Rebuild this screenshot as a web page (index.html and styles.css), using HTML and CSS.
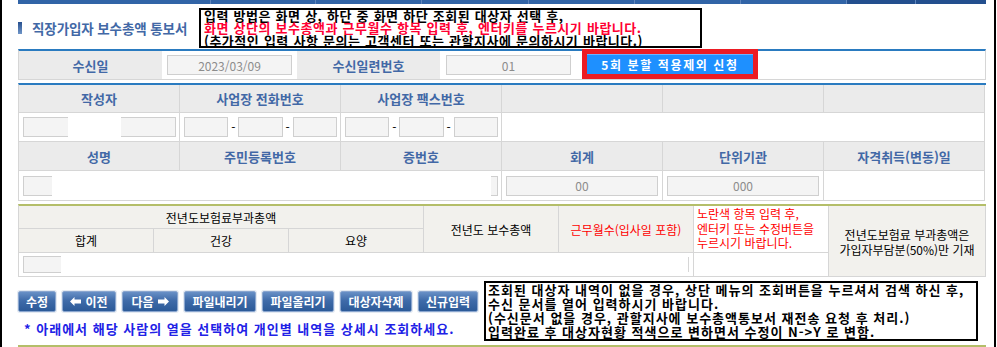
FILE: index.html
```html
<!DOCTYPE html>
<html lang="ko">
<head>
<meta charset="utf-8">
<title>직장가입자 보수총액 통보서</title>
<link rel="stylesheet" href="styles.css">
</head>
<body>
<div class="frame">
  <div class="page">
    <div class="tabbar">
      <span class="seg"></span><span class="seg"></span><span class="seg"></span><span class="seg"></span><span class="seg"></span><span class="seg"></span><span class="seg"></span><span class="seg dark"></span><span class="seg dark"></span>
    </div>

    <div class="title-row">
      <h1 class="title"><span class="title-mark"></span>직장가입자 보수총액 통보서</h1>
      <div class="notice-top">
        <p>입력 방법은 화면 상, 하단 중 화면 하단 조회된 대상자 선택 후,</p>
        <p class="red">화면 상단의 보수총액과 근무월수 항목 입력 후, 엔터키를 누르시기 바랍니다.</p>
        <p>(추가적인 입력 사항 문의는 고객센터 또는 관할지사에 문의하시기 바랍니다.)</p>
      </div>
    </div>

    <div class="recv">
      <div class="lbl lbl-a">수신일</div>
      <div class="val val-a"><span class="inp">2023/03/09</span></div>
      <div class="lbl lbl-b">수신일련번호</div>
      <div class="val val-b"><span class="inp">01</span></div>
      <div class="btn-cell"><span class="red-box"><button class="apply-btn">5회 분할 적용제외 신청</button></span></div>
    </div>

    <div class="info">
      <div class="th">작성자</div>
      <div class="th">사업장 전화번호</div>
      <div class="th">사업장 팩스번호</div>
      <div class="th"></div>
      <div class="th"></div>
      <div class="th"></div>

      <div class="td split">
        <span class="inp part-l"></span><span class="hole"></span><span class="inp part-r"></span>
      </div>
      <div class="td phone"><span class="inp"></span><span class="dash">-</span><span class="inp"></span><span class="dash">-</span><span class="inp"></span></div>
      <div class="td phone"><span class="inp"></span><span class="dash">-</span><span class="inp"></span><span class="dash">-</span><span class="inp"></span></div>
      <div class="td span3"></div>

      <div class="th">성명</div>
      <div class="th">주민등록번호</div>
      <div class="th">증번호</div>
      <div class="th">회계</div>
      <div class="th">단위기관</div>
      <div class="th">자격취득(변동)일</div>

      <div class="td span3 masked"><span class="inp sliver-a"></span><span class="inp sliver-b"></span></div>
      <div class="td pad"><span class="inp">00</span></div>
      <div class="td pad"><span class="inp">000</span></div>
      <div class="td"></div>
    </div>

    <div class="premium">
      <div class="ph c-grp">전년도보험료부과총액</div>
      <div class="ph c-pay">전년도 보수총액</div>
      <div class="ph c-mon red">근무월수(입사일 포함)</div>
      <div class="ph c-note">노란색 항목 입력 후,<br>엔터키 또는 수정버튼을<br>누르시기 바랍니다.</div>
      <div class="ph c-info">전년도보험료 부과총액은<br>가입자부담분(50%)만 기재</div>
      <div class="ph c-sum">합계</div>
      <div class="ph c-h">건강</div>
      <div class="ph c-y">요양</div>
      <div class="pd c-data"><span class="inp sliver-c"></span><span class="edge"></span></div>
      <div class="pd c-last"></div>
    </div>

    <div class="bottom">
      <div class="actions">
        <div class="btns">
          <button class="btn b-edit">수정</button>
          <button class="btn b-prev"><svg class="arr" viewBox="0 0 11 9" width="11" height="9"><path d="M0 4.5 L4.5 0 L4.5 2.5 L11 2.5 L11 6.5 L4.5 6.5 L4.5 9 Z" fill="#fff"/></svg>이전</button>
          <button class="btn b-next">다음<svg class="arr arr-r" viewBox="0 0 11 9" width="11" height="9"><path d="M11 4.5 L6.5 0 L6.5 2.5 L0 2.5 L0 6.5 L6.5 6.5 L6.5 9 Z" fill="#fff"/></svg></button>
          <button class="btn b-file">파일내리기</button>
          <button class="btn b-file">파일올리기</button>
          <button class="btn b-file">대상자삭제</button>
          <button class="btn b-new">신규입력</button>
        </div>
        <p class="hint">* 아래에서 해당 사람의 열을 선택하여 개인별 내역을 상세시 조회하세요.</p>
      </div>
      <div class="notice-bottom">
        <p>조회된 대상자 내역이 없을 경우, 상단 메뉴의 조회버튼을 누르셔서 검색 하신 후,</p>
        <p>수신 문서를 열어 입력하시기 바랍니다.</p>
        <p>(수신문서 없을 경우, 관할지사에 보수총액통보서 재전송 요청 후 처리.)</p>
        <p>입력완료 후 대상자현황 적색으로 변하면서 수정이 N-&gt;Y 로 변함.</p>
      </div>
    </div>
    <div class="next-line"></div>
  </div>
</div>
</body>
</html>
```
FILE: styles.css
```css
* { box-sizing: border-box; margin: 0; padding: 0; }
html, body { background: #fff; }
body {
  width: 997px;
  height: 347px;
  overflow: hidden;
  font-family: "Noto Sans CJK KR", "Noto Sans", sans-serif;
  font-size: 12px;
  color: #000;
}
.frame {
  width: 996px;
  height: 347px;
  border-left: 2px solid #000;
  border-right: 2px solid #000;
}
.page {
  margin-left: 16px;
  width: 968px;
}

/* top tab strip */
.tabbar {
  height: 4px;
  display: grid;
  grid-template-columns: 192px 104px 105px 106px 105px 105px 105px 68px 1fr;
  column-gap: 1px;
  background: #5f86bd;
}
.seg { background: #3164a7; }
.seg.dark { background: #234f8e; }

/* title row */
.title-row {
  height: 45px;
  display: flex;
  align-items: flex-start;
}
.title {
  width: 181px;
  height: 45px;
  display: flex;
  align-items: center;
  padding-top: 3px;
  font-size: 13.5px;
  font-weight: 700;
  color: #4268a6;
  letter-spacing: -0.1px;
}
.title-mark {
  width: 4px;
  height: 12px;
  margin-right: 10px;
  background: linear-gradient(#27508f, #6f95c8);
}
.notice-top {
  margin-top: 4px;
  width: 503px;
  height: 40px;
  border: 2px solid #000;
  padding: 0 3px;
  font-size: 13px;
  font-weight: 700;
  line-height: 12.4px;
  letter-spacing: 0.5px;
  word-spacing: 0.5px;
  white-space: nowrap;
}
.red { color: #ff0033; }

/* inputs */
.inp {
  display: flex;
  align-items: center;
  justify-content: center;
  height: 20px;
  background: #f4f4f4;
  border: 1px solid #cfcfcf;
  color: #8c8c8c;
  font-size: 12px;
}

/* receive row */
.recv {
  display: flex;
  height: 31px;
  border-top: 2px solid #2a7bc0;
  border-bottom: 1px solid #d6d6d6;
  border-left: 1px solid #d6d6d6;
  border-right: 1px solid #d6d6d6;
}
.lbl {
  display: flex;
  align-items: center;
  justify-content: center;
  background: #ebebeb;
  color: #4268a6;
  font-weight: 700;
  font-size: 13px;
}
.lbl-a { width: 143px; }
.lbl-b { width: 143px; }
.val {
  display: flex;
  align-items: center;
}
.val .inp { flex: 1; }
.val-a { width: 135px; padding: 0 5px 0 5px; }
.val-b { width: 136px; padding: 0 5px 0 6px; }
.btn-cell {
  flex: 1;
  padding-left: 6px;
  margin-top: -2px;
}
.red-box {
  display: inline-block;
  border: 5px solid #ec1c24;
}
.apply-btn {
  display: block;
  width: 166px;
  height: 20px;
  border: none;
  border-top: 1px solid #6ab4ff;
  background: #1e90ff;
  color: #fff;
  font-family: inherit;
  font-weight: 700;
  font-size: 12px;
  letter-spacing: 1.6px;
  line-height: 18px;
}

/* info grid */
.info {
  margin-top: 3px;
  display: grid;
  grid-template-columns: repeat(6, 161px);
  grid-template-rows: 28px 29px 29px 30px;
  border-top: 2px solid #2a7bc0;
  border-left: 1px solid #d6d6d6;
}
.th, .td {
  border-right: 1px solid #d6d6d6;
  border-bottom: 1px solid #d6d6d6;
}
.th {
  display: flex;
  align-items: center;
  justify-content: center;
  background: #ebebeb;
  color: #4268a6;
  font-weight: 700;
  font-size: 13px;
}
.td {
  display: flex;
  align-items: center;
  background: #fff;
}
.span3 { grid-column: span 3; }
.split { padding: 0 3px 0 4px; }
.part-l { width: 45px; border-right: none; }
.hole { width: 53px; height: 22px; background: #fff; }
.part-r { flex: 1; border-left: none; }
.phone { padding: 0 3px 0 4px; }
.phone .inp { flex: 1; }
.dash {
  width: 10px;
  text-align: center;
  font-size: 12px;
  line-height: 12px;
  color: #000;
}
.masked {
  justify-content: space-between;
  padding: 0 3px 0 4px;
}
.sliver-a { width: 29px; border-right: none; }
.sliver-b { width: 7px; border-left: none; }
.pad { padding: 0 4px; }
.pad .inp { flex: 1; }

/* premium grid */
.premium {
  margin-top: 3px;
  display: grid;
  grid-template-columns: repeat(6, 135px) 1fr;
  grid-template-rows: 23px 24px 24px;
  border-top: 2px solid #b4be69;
  border-left: 1px solid #d6d6d6;
}
.ph, .pd {
  border-right: 1px solid #d6d6d6;
  border-bottom: 1px solid #d6d6d6;
}
.ph {
  display: flex;
  align-items: center;
  justify-content: center;
  background: #f2f1ed;
  font-size: 12px;
  line-height: 15px;
  text-align: center;
}
.ph.red { color: #ff0000; }
.c-grp { grid-column: 1 / span 3; grid-row: 1; }
.c-pay { grid-column: 4; grid-row: 1 / span 2; }
.c-mon { grid-column: 5; grid-row: 1 / span 2; }
.c-note {
  grid-column: 6;
  grid-row: 1 / span 2;
  background: #fff;
  color: #ff0000;
  justify-content: flex-start;
  text-align: left;
  padding-left: 3px;
  line-height: 14.5px;
}
.c-info { grid-column: 7; grid-row: 1 / span 3; padding-top: 2px; }
.c-sum { grid-column: 1; grid-row: 2; }
.c-h { grid-column: 2; grid-row: 2; }
.c-y { grid-column: 3; grid-row: 2; }
.pd { background: #fff; }
.c-data {
  grid-column: 1 / span 5;
  grid-row: 3;
  display: flex;
  align-items: center;
  justify-content: space-between;
  padding: 0 4px 0 4px;
}
.c-last { grid-column: 6; grid-row: 3; }
.sliver-c { width: 38px; height: 17px; border-right: none; }
.edge { width: 1px; height: 15px; background: #d6d6d6; }

/* bottom */
.bottom {
  height: 68px;
  display: flex;
}
.actions { width: 466px; }
.btns {
  margin-top: 14px;
  display: flex;
  gap: 6px;
}
.btn {
  height: 21px;
  display: flex;
  align-items: center;
  justify-content: center;
  gap: 4px;
  border: 1px solid #8aa6cf;
  border-radius: 2px;
  background: linear-gradient(#6890c6, #3f6ba9 45%, #2c5a98);
  box-shadow: 0 0 0 1px #e3e9f1;
  color: #fff;
  font-family: inherit;
  font-weight: 700;
  font-size: 12px;
  line-height: 14px;
}
.b-edit { width: 38px; }
.b-prev { width: 54px; }
.b-next { width: 56px; }
.b-file { width: 72px; }
.b-new { width: 60px; }
.arr { display: block; }
.hint {
  margin-top: 8px;
  padding-left: 6px;
  color: #2121e6;
  font-weight: 700;
  font-size: 13px;
  line-height: 18px;
  letter-spacing: 1px;
  white-space: nowrap;
}
.notice-bottom {
  margin-top: 4px;
  width: 494px;
  height: 60px;
  border: 2px solid #000;
  padding: 0 2px;
  font-size: 13px;
  font-weight: 700;
  line-height: 14px;
  letter-spacing: 1px;
  white-space: nowrap;
}
.next-line {
  height: 2px;
  border-top: 2px solid #b4be69;
}
```
